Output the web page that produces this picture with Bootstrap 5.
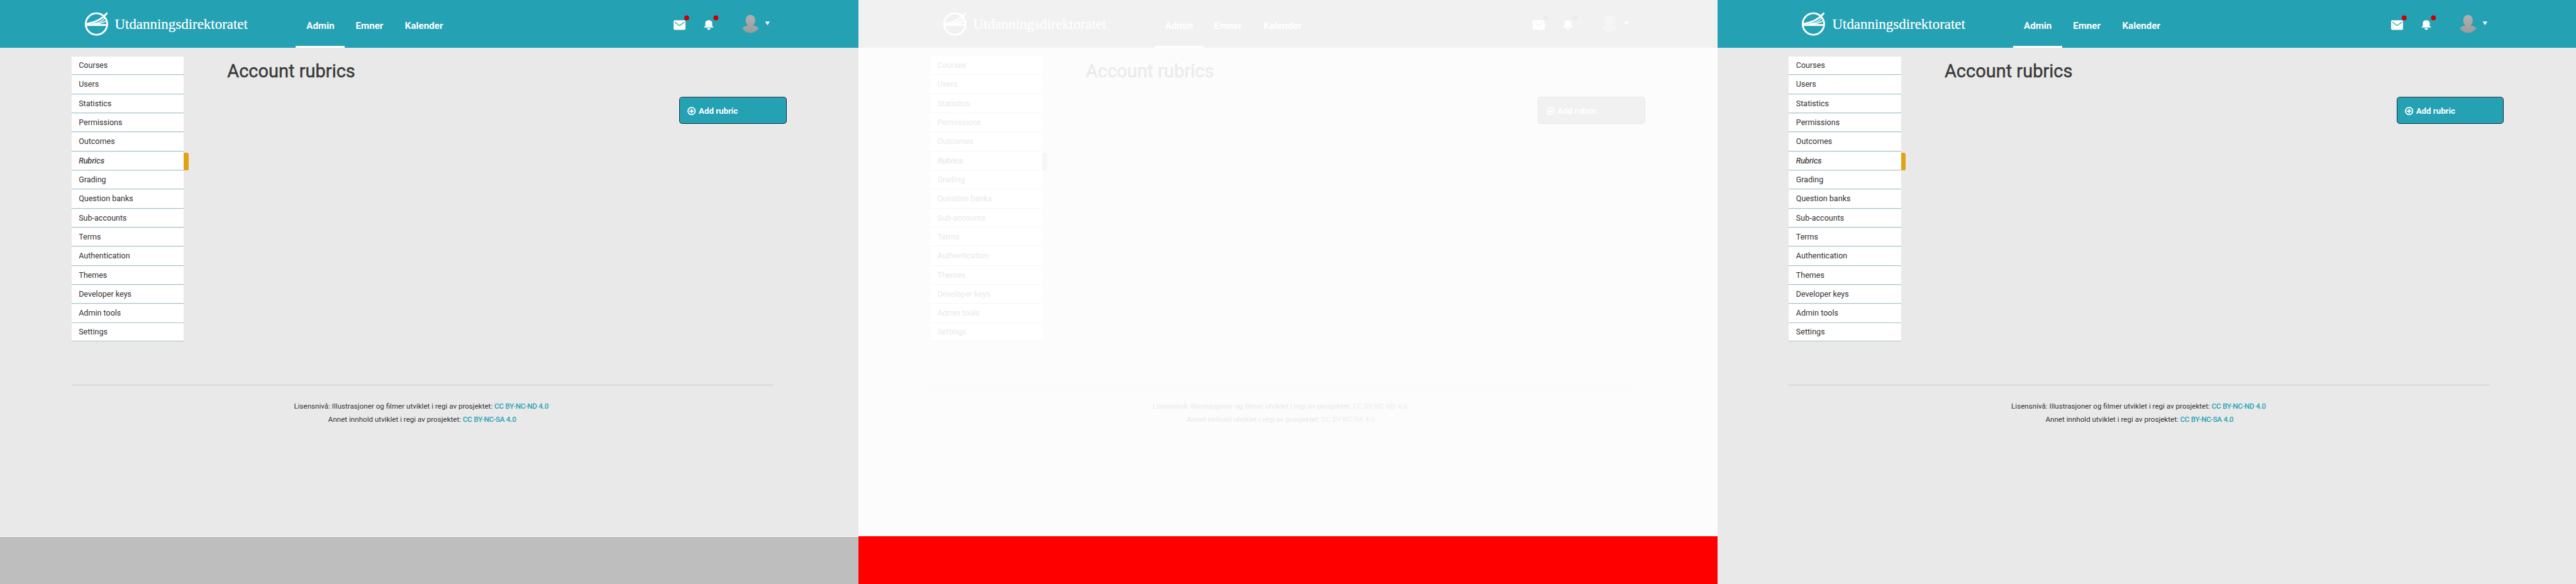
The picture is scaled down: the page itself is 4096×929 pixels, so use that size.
<!DOCTYPE html>
<html lang="no">
<head>
<meta charset="utf-8">
<title>Account rubrics</title>
<link href="https://cdn.jsdelivr.net/npm/bootstrap@5.3.0/dist/css/bootstrap.min.css" rel="stylesheet">
<style>
/* 1rem = ten design pixels; three 144rem panes fill the window width */
html{font-size:calc(100vw / 432)}
body{font-family:Roboto,sans-serif;font-size:1.4rem;line-height:1;overflow:hidden;background:#e9e9e9}
.pane{--bar:#25a1b4;--page:#e9e9e9;--ink:#333;--title:#3a3a3a;--row:#fff;--line:#a7c1c7;--pale:#e6f3f4;--mark:#e0a314;--edge:#0b2f3d;--shine:#51a9bb;--link:#25a1b4;--rule:#c8c8c8;--dot:#c80000;--face1:#b0b0b0;--face2:#9c9c9c;
  width:144rem;height:98rem;flex:none;background:var(--page);color:var(--ink)}
.pane-diff{--bar:#f1f1f1;--page:#fcfcfc;--ink:#e9e9e9;--title:#ebebeb;--line:#f7f7f7;--pale:#fefefe;--mark:#f6f6f6;--edge:#e6e6e6;--shine:#f2f2f2;--link:#f1f1f1;--rule:#f9f9f9;--dot:#ebebeb;--face1:#f6f6f6;--face2:#f4f4f4}
.view{height:90rem}
.topbar{height:8rem;background:var(--bar);color:#fff;padding-left:14.2rem}
.emblem{width:4rem;height:4rem;margin-right:1rem}
.wordmark{width:22.6rem;height:4rem;overflow:visible}
.wordmark text{font-family:"Liberation Serif",serif;font-size:25px;fill:#fff;stroke:#fff;stroke-width:.25}
.tabs{margin-left:7.8rem}
.tab-item{padding:2.5rem 1.8rem 0;font-size:1.6rem;line-height:3.6rem;font-weight:700;color:#fff;text-decoration:none;border-bottom:.4rem solid transparent;height:8rem;width:8.25rem;white-space:nowrap}
.tab-item.on{border-color:#fff}
.tools{width:17rem;height:4rem;margin-left:auto;margin-right:14rem}
.side{width:18.8rem;margin:1.5rem 0 0 12rem}
.side a{height:3.2rem;border-bottom:.1rem solid var(--line);border-top:.1rem solid var(--pale);background:var(--row);color:var(--ink);padding-left:1.2rem;font-size:1.325rem;line-height:3.05rem;text-decoration:none;position:relative}
.side a:first-child,.side a:last-child{height:3.1rem;border-top:0}
.side a.now{font-style:italic;-webkit-text-stroke:.025rem}
.side a.now::after{content:"";position:absolute;left:100%;top:.1rem;width:.8rem;height:3rem;background:var(--mark);border-radius:0 .3rem .3rem 0}
.content{width:93.8rem;margin-left:7.3rem}
.content h1{font-size:3.06rem;font-weight:400;line-height:3.6rem;color:var(--title);margin:2.15rem 0 0;-webkit-text-stroke:.05rem}
.add{margin-top:2.45rem;width:18rem;height:4.6rem;border:.1rem solid var(--edge);border-radius:.5rem;background:var(--bar);box-shadow:inset 0 .1rem 0 var(--shine);color:#fff;font-size:1.4rem;font-weight:700;padding:.2rem 0 0 1.32rem;text-align:left;line-height:1}
.add svg{width:1.4rem;height:1.4rem;margin-right:.46rem}
.main-row{height:56.5rem}
.foot{width:117.6rem;margin-left:12rem;border-top:.1rem solid var(--rule);padding-top:2.5rem;text-align:center;font-size:1.226rem}
.foot div{height:2.15rem;line-height:2.2rem}
.foot a{color:var(--link);text-decoration:none;font-size:1.19rem;-webkit-text-stroke:.035rem}
.foot .first-line{padding-right:.3rem}
.tail{height:8rem}
.tail-missing{background:#bebebe;border-top:1px solid #fff}
.tail-red{background:#f00}
</style>
</head>
<body>
<div class="d-flex" id="panes"></div>

<template id="page">
  <div class="view">
    <header class="topbar d-flex align-items-center">
      <svg class="emblem" viewBox="0 0 40 40" fill="none" stroke="#fff">
        <circle cx="19.4" cy="20.3" r="18" stroke-width="3"/>
        <path d="M2 21.8H37" stroke-width="3.2"/>
        <path d="M3 20C17 18 29 12 37.5 1.5" stroke-width="2.8"/>
        <path d="M12 20.3C22 19.5 30 15 34.5 9.5" stroke-width="1.4"/>
        <path d="M15 20.8C24 20.3 31 17.5 37 14.5" stroke-width="2"/>
      </svg>
      <svg class="wordmark" viewBox="0 0 226 40"><text x=".5" y="28.6" textLength="223" lengthAdjust="spacingAndGlyphs">Utdanningsdirektoratet</text></svg>
      <nav class="tabs d-flex">
        <a class="tab-item on" href="#">Admin</a><a class="tab-item" href="#">Emner</a><a class="tab-item" href="#">Kalender</a>
      </nav>
      <svg class="tools" viewBox="0 0 170 40">
        <rect y="14" width="20" height="16" rx="2" fill="#fff"/>
        <path d="M2 17L10 23L18.5 17" fill="none" stroke="var(--bar)" stroke-width="1.3"/>
        <circle cx="22" cy="10" r="4.1" fill="var(--dot)"/>
        <path d="M51 26V25L53.2 24V18.5C53.2 15.8 55.6 14 59 14S64.8 15.8 64.8 18.5V24L67 25V26Z" fill="#fff"/>
        <path d="M56 27.2H62C61.8 29 60.8 30 59 30S56.2 29 56 27.2Z" fill="#fff"/>
        <circle cx="71" cy="10" r="4.1" fill="var(--dot)"/>
        <linearGradient id="face" x2="0" y2="1"><stop stop-color="var(--face1)"/><stop offset="1" stop-color="var(--face2)"/></linearGradient>
        <path d="M129 5C134 5 137 9 137 14C137 18 135.2 21.5 132.8 23C137 23 141 24.8 142.8 27.5C139.5 32.5 134.5 35 129 35S118.5 32.5 115.5 27.5C117 24.8 121 23 125.2 23C122.8 21.5 121 18 121 14C121 9 124 5 129 5Z" fill="url(#face)"/>
        <path d="M153.6 16H161.4L157.5 22.2Z" fill="#fff"/>
      </svg>
    </header>
    <div class="main-row d-flex align-items-start">
      <nav class="side d-flex flex-column">
        <a href="#">Courses</a><a href="#">Users</a><a href="#">Statistics</a><a href="#">Permissions</a><a href="#">Outcomes</a><a class="now" href="#">Rubrics</a><a href="#">Grading</a><a href="#">Question banks</a><a href="#">Sub-accounts</a><a href="#">Terms</a><a href="#">Authentication</a><a href="#">Themes</a><a href="#">Developer keys</a><a href="#">Admin tools</a><a href="#">Settings</a>
      </nav>
      <main class="content d-flex flex-column">
        <h1>Account rubrics</h1>
        <button class="add d-flex align-items-center align-self-end" type="button">
          <svg viewBox="0 0 14 14" fill="none" stroke="#fff"><circle cx="7" cy="7" r="6" stroke-width="1.9"/><path d="M7 3.3V10.7M3.3 7H10.7" stroke-width="2.1"/></svg>Add rubric
        </button>
      </main>
    </div>
    <footer class="foot">
      <div class="first-line">Lisensnivå: Illustrasjoner og filmer utviklet i regi av prosjektet: <a href="#">CC BY-NC-ND 4.0</a></div>
      <div>Annet innhold utviklet i regi av prosjektet: <a href="#">CC BY-NC-SA 4.0</a></div>
    </footer>
  </div>
  <div class="tail"></div>
</template>

<script src="https://cdn.jsdelivr.net/npm/bootstrap@5.3.0/dist/js/bootstrap.bundle.min.js"></script>
<script>
const page = document.getElementById('page');
[['', 'tail-missing'], ['pane-diff', 'tail-red'], ['', 'tail-plain']].forEach(([look, tail], i) => {
  const pane = document.createElement('section');
  pane.className = ('pane ' + look).trim();
  pane.append(page.content.cloneNode(true));
  pane.querySelector('.tail').classList.add(tail);
  pane.querySelector('linearGradient').id = 'face' + i;
  pane.querySelector('[fill="url(#face)"]').setAttribute('fill', `url(#face${i})`);
  document.getElementById('panes').append(pane);
});
</script>
</body>
</html>
